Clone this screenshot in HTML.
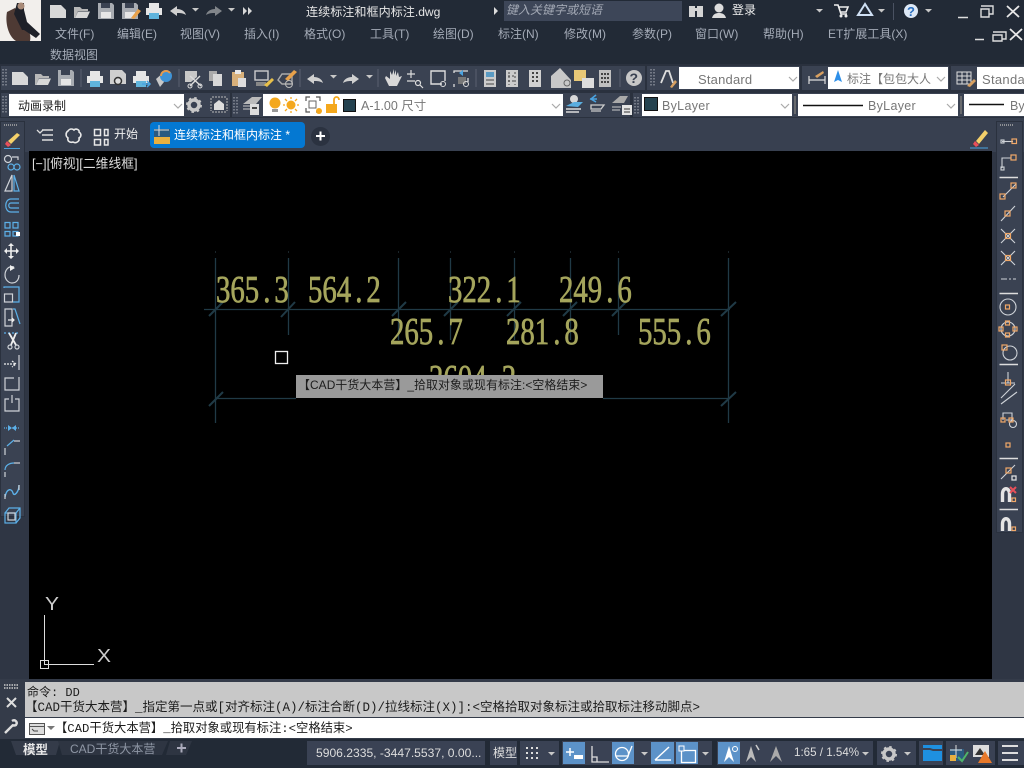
<!DOCTYPE html>
<html><head><meta charset="utf-8"><style>
html,body{margin:0;padding:0;background:#222a36;overflow:hidden}
#r{position:relative;width:1024px;height:768px;overflow:hidden;font-family:"Liberation Sans","Noto Sans CJK SC",sans-serif}
.b{position:absolute}
.t{position:absolute;white-space:nowrap;line-height:1}
.m{font-size:12px;color:#a4abb7}
.c{position:absolute;background:#fff}
.k{font-size:13px;color:#777}
.cm{font-family:"Liberation Mono","Noto Sans CJK SC",monospace;font-size:12.5px;color:#1c1c1c}
svg{position:absolute;left:0;top:0}
</style></head><body><div id="r">
<div class="b" style="left:0;top:0;width:1024px;height:64px;background:#222a36"></div>
<div class="b" style="left:504px;top:1px;width:178px;height:20px;background:#3d4658"></div>
<div class="b" style="left:0;top:64px;width:1024px;height:55px;background:#2a313e"></div>
<div class="b" style="left:1px;top:66px;width:644px;height:24px;background:#3a4252"></div>
<div class="b" style="left:647px;top:66px;width:377px;height:24px;background:#3a4252"></div>
<div class="b" style="left:1px;top:93px;width:229px;height:24px;background:#3a4252"></div>
<div class="b" style="left:232px;top:93px;width:398px;height:24px;background:#3a4252"></div>
<div class="b" style="left:633px;top:93px;width:391px;height:24px;background:#3a4252"></div>
<div class="b" style="left:0;top:118px;width:1024px;height:34px;background:#384050"></div>
<div class="b" style="left:0;top:121px;width:25px;height:396px;background:#3a4252;border:1px solid #2a313e;box-sizing:border-box"></div>
<div class="b" style="left:0;top:152px;width:29px;height:530px;background:#2f3644"></div>
<div class="b" style="left:992px;top:152px;width:32px;height:530px;background:#2f3644"></div>
<div class="b" style="left:996px;top:121px;width:27px;height:412px;background:#3a4252;border:1px solid #2a313e;box-sizing:border-box"></div>
<div class="b" style="left:0;top:121px;width:25px;height:396px;background:#3a4252;border:1px solid #2a313e;box-sizing:border-box"></div>
<div class="b" style="left:29px;top:151px;width:963px;height:528px;background:#000"></div>
<div class="b" style="left:0;top:679px;width:1024px;height:60px;background:#343b49"></div>
<div class="b" style="left:25px;top:682px;width:999px;height:35px;background:#c8c8c8"></div>
<div class="c" style="left:25px;top:718px;width:999px;height:20px"></div>
<div class="b" style="left:0;top:739px;width:1024px;height:29px;background:#222a36"></div>
<div class="c" style="left:9px;top:94px;width:175px;height:22px"></div>
<div class="c" style="left:263px;top:94px;width:300px;height:22px"></div>
<div class="c" style="left:642px;top:94px;width:150px;height:22px"></div>
<div class="c" style="left:798px;top:94px;width:160px;height:22px"></div>
<div class="c" style="left:964px;top:94px;width:60px;height:22px"></div>
<div class="c" style="left:679px;top:67px;width:120px;height:22px"></div>
<div class="c" style="left:828px;top:67px;width:120px;height:22px"></div>
<div class="c" style="left:977px;top:67px;width:47px;height:22px"></div>
<div class="b" style="left:150px;top:122px;width:155px;height:26px;background:#0478d2;border-radius:4px"></div>
<div class="b" style="left:311px;top:127px;width:19px;height:19px;background:#2b3240;border-radius:50%"></div>
<div class="b" style="left:307px;top:741px;width:178px;height:24px;background:#3a4254"></div>
<div class="b" style="left:490px;top:741px;width:27px;height:24px;background:#3a4254"></div>
<div class="b" style="left:520px;top:741px;width:39px;height:24px;background:#3a4254"></div>
<div class="b" style="left:562px;top:741px;width:150px;height:24px;background:#3a4254"></div>
<div class="b" style="left:717px;top:741px;width:156px;height:24px;background:#3a4254"></div>
<div class="b" style="left:877px;top:741px;width:39px;height:24px;background:#3a4254"></div>
<div class="b" style="left:919px;top:741px;width:24px;height:24px;background:#3a4254"></div>
<div class="b" style="left:946px;top:741px;width:49px;height:24px;background:#3a4254"></div>
<div class="b" style="left:998px;top:741px;width:26px;height:24px;background:#3a4254"></div>
<div class="b" style="left:563px;top:742px;width:22px;height:22px;background:#5c92c8"></div>
<div class="b" style="left:612px;top:742px;width:22px;height:22px;background:#5c92c8"></div>
<div class="b" style="left:651px;top:742px;width:23px;height:22px;background:#5c92c8"></div>
<div class="b" style="left:676px;top:742px;width:22px;height:22px;background:#5c92c8"></div>
<div class="b" style="left:718px;top:742px;width:22px;height:22px;background:#5c92c8"></div>

<svg width="1024" height="768" viewBox="0 0 1024 768" fill="none">
<defs>
<g id="new"><path d="M0 0H11L16 5V13H0Z" fill="#d8d8d8"/></g>
<g id="open"><path d="M0 2H6L8 4H14V6H4L1 13H0Z" fill="#b8b8b8"/><path d="M4 6.500H16L13 13H1Z" fill="#d8d8d8"/></g>
<g id="save"><path d="M0 0H14L16 2V16H0Z" fill="#a8acb2"/><rect x="3" y="0" width="9" height="5" fill="#3a4252"/><rect x="3" y="9" width="10" height="6" fill="#e6e6e6"/></g>
<g id="print"><rect x="3" y="0" width="10" height="5" fill="#e6e6e6"/><rect x="0" y="5" width="16" height="7" fill="#e6e6e6"/><rect x="3" y="10" width="10" height="6" fill="#60b4dc"/></g>
<g id="undo"><path d="M0 6L7 1V4C11 4 15 6 16 10C13 8 10 8 7 8V11Z" fill="#d0d0d0"/></g>
<g id="redo"><path d="M16 6L9 1V4C5 4 1 6 0 10C3 8 6 8 9 8V11Z" fill="#d0d0d0"/></g>
<g id="dd"><path d="M0 0H7L3.500 3.500Z" fill="#c8c8c8"/></g>
<g id="chev"><path d="M0 0L4 4L8 0" stroke="#aaa" stroke-width="1.200"/></g>
<g id="grip"><path d="M0 0V18M3 0V18" stroke="#9aa0aa" stroke-width="1.200" stroke-dasharray="1.500 1.500"/></g>
<g id="gear"><circle cx="8" cy="8" r="5" stroke="#c8c8c8" stroke-width="3.500"/><circle cx="8" cy="8" r="7" stroke="#c8c8c8" stroke-width="2" stroke-dasharray="2.500 3"/></g>
</defs>
<!-- avatar -->
<rect x="0" y="0" width="41" height="41" fill="#f2efec"/>
<path d="M7 12C5 22 8 36 16 41H30C32 34 26 24 23 20L15 8Z" fill="#4e3a34"/>
<path d="M17 3H24V10L27 22L40 34L36 38L24 30L22 30L14 14Z" fill="#1e2028"/>
<circle cx="21" cy="6" r="3.500" fill="#a88a78"/>
<!-- quick access -->
<use href="#new" x="50" y="5"/><use href="#open" x="74" y="5"/><use href="#save" x="98" y="3"/><use href="#save" x="122" y="3"/>
<path d="M131 18L138 9L141 11L134 19Z" fill="#e8a14a"/>
<use href="#print" x="146" y="3"/><use href="#undo" x="170" y="5"/><use href="#dd" x="192" y="8"/>
<g opacity=".55"><use href="#redo" x="206" y="5"/></g><use href="#dd" x="228" y="8"/>
<path d="M243 7L247 11L243 15ZM248 7L252 11L248 15Z" fill="#d8d8d8"/>
<path d="M494 7L498 11L494 15Z" fill="#ddd"/>
<!-- right title -->
<path d="M689 6H695V17H689ZM697 6H703V17H697Z" fill="#d4d4d4"/><rect x="694" y="8" width="4" height="3" fill="#d4d4d4"/>
<circle cx="719" cy="8" r="4.500" fill="#ddd"/><path d="M712 18C713 14 716 13 719 13C722 13 725 14 726 18Z" fill="#ddd"/>
<use href="#dd" x="816" y="9"/>
<path d="M834 5H838L841 14H847M839 7H848L846 12H841" stroke="#eee" stroke-width="1.600"/><circle cx="841" cy="16" r="1.500" fill="#eee"/><circle cx="846" cy="16" r="1.500" fill="#eee"/>
<path d="M865 4L858 15H872Z" stroke="#cfe0f4" stroke-width="2"/><use href="#dd" x="878" y="9"/>
<path d="M893.500 3V20" stroke="#4a5262"/>
<circle cx="911" cy="11" r="7" fill="#dde8f6"/>
<use href="#dd" x="925" y="9"/>
<path d="M958 17.500H968M981 6H993V14H989M981 9H989V17H981Z" stroke="#ddd" stroke-width="1.400"/>
<path d="M1007 6L1019 17M1019 6L1007 17" stroke="#e8e8e8" stroke-width="1.800"/>
<path d="M975 39.500H984M993 32H1006V39H1002M993 35H1002V41H993Z" stroke="#ddd" stroke-width="1.400"/>
<path d="M1010 29L1022 40M1022 29L1010 40" stroke="#e8e8e8" stroke-width="1.800"/>
<!-- toolbar row 1 -->
<use href="#grip" x="3" y="69"/>
<use href="#new" x="12" y="72"/><use href="#open" x="35" y="72"/><use href="#save" x="58" y="70"/>
<path d="M81 69V87" stroke="#596070"/>
<use href="#print" x="87" y="71"/>
<path d="M110 70H122L126 74V84H110Z" fill="#cfcfcf"/><circle cx="118" cy="81" r="3.500" stroke="#333" stroke-width="1.500" fill="#ddd"/>
<use href="#print" x="133" y="71"/><path d="M142 84H150M147 81L150 84L147 87" stroke="#4aa3e0" stroke-width="1.500"/>
<path d="M156 79L164 72V82L160 87Z" fill="#c8c8c8"/><circle cx="166" cy="76" r="6" fill="#3f93d6"/><path d="M161 76A5 5 0 0 1 170 73" stroke="#e89a4a" stroke-width="2"/>
<path d="M179 69V87" stroke="#596070"/>
<path d="M185 71H197V77L191 82H185Z" fill="#c8c8c8"/><path d="M190 76L201 86M200 76L190 86" stroke="#ddd" stroke-width="1.400"/><circle cx="190" cy="86" r="2" stroke="#ddd"/><circle cx="200" cy="86" r="2" stroke="#ddd"/>
<path d="M209 71H217V81H209Z" fill="#aaa"/><path d="M213 74H222V86H213Z" fill="#d8d8d8"/>
<path d="M232 72H244V78H238V86H232Z" fill="#d8b07a"/><rect x="235" y="70" width="6" height="4" fill="#e8e8e8"/><rect x="238" y="78" width="8" height="9" fill="#ddd"/>
<rect x="255" y="71" width="13" height="9" stroke="#ccc" stroke-width="1.400"/><path d="M256 82H266V86H256Z" fill="#888"/><path d="M264 85L272 78L274 80L267 87Z" fill="#e8c04a"/>
<path d="M278 80L282 74H292V84H282Z" stroke="#aaa" stroke-width="1.400"/><path d="M285 79L294 70L297 72L288 81Z" fill="#e8a14a"/><circle cx="289" cy="84" r="3.500" stroke="#bbb"/>
<path d="M300 69V87" stroke="#596070"/>
<use href="#undo" x="307" y="73"/><use href="#dd" x="330" y="75"/><use href="#redo" x="343" y="73"/><use href="#dd" x="366" y="75"/>
<path d="M378 69V87" stroke="#596070"/>
<path d="M385 78L389 86H397L402 76L399 77L398 72L396 76V70L394 75V69L392 75L390 71V79L386 76Z" fill="#d8d8d8"/>
<path d="M407 74H415M411 70V78M407 81H415" stroke="#ddd" stroke-width="1.200"/><circle cx="418" cy="83" r="2.500" stroke="#ddd" stroke-width="1.200"/><path d="M420 85L423 88" stroke="#ddd" stroke-width="1.200"/>
<path d="M442 84H431V71H445V81" stroke="#ddd" stroke-width="1.400"/><circle cx="443" cy="84" r="2.500" stroke="#ddd"/>
<path d="M454 73V71H468M454 87V84M468 78V82" stroke="#ddd" stroke-width="1.300"/><path d="M459 73L463 70V76Z" fill="#4aa3e0"/><rect x="458" y="77" width="8" height="7" fill="#777"/><circle cx="466" cy="84" r="2.500" stroke="#ddd"/>
<path d="M476 69V87" stroke="#596070"/>
<rect x="484" y="70" width="12" height="17" fill="#ccc"/><rect x="486" y="72" width="8" height="5" fill="#5a9bc4"/><path d="M486 80H494M486 84H494" stroke="#444"/>
<rect x="506" y="70" width="12" height="17" fill="#ccc"/><path d="M509 72V85M515 72V85M508 76H516M508 81H516" stroke="#444" stroke-dasharray="2 2"/>
<path d="M529 70H541V87H529Z" fill="#d0d0d0"/><path d="M532 73H538M532 77H538M532 81H538" stroke="#444" stroke-width="2" stroke-dasharray="2 2"/>
<path d="M551 76L560 68L571 80V88H551Z" fill="#c8c8c8"/><circle cx="567" cy="83" r="3" stroke="#666"/>
<rect x="574" y="70" width="12" height="11" fill="#e8c877"/><rect x="582" y="78" width="12" height="10" fill="#ddd"/>
<rect x="599" y="70" width="12" height="17" fill="#c0c0c0"/><path d="M601 74H609M601 78H609M601 82H609" stroke="#444" stroke-width="2" stroke-dasharray="2 1"/>
<path d="M620 69V87" stroke="#596070"/>
<circle cx="634" cy="78" r="8" fill="#c8c8c8"/>
<use href="#grip" x="651" y="69"/>
<path d="M661 83L666 71H669L673 83" stroke="#ddd" stroke-width="1.800"/><path d="M670 87L675 80L677 82L672 88Z" fill="#d8a060"/>
<path d="M801 66V90" stroke="#2a313e" stroke-width="2"/>
<path d="M809 76V84M825 76V84M809 80H825" stroke="#ddd" stroke-width="1.200"/><path d="M815 76L823 71L824 73L817 78Z" fill="#d8a060"/>
<path d="M834 82L838 70L842 82L838 80Z" fill="#2e8fe8"/>
<path d="M950 66V90" stroke="#2a313e" stroke-width="2"/>
<path d="M957 72H971V84H957ZM957 76H971M957 80H971M962 72V84M967 72V84" stroke="#ddd"/><path d="M967 86L974 79L976 81L970 87Z" fill="#d8a060"/>
<use href="#chev" x="789" y="77"/><use href="#chev" x="937" y="77"/>
<!-- toolbar row 2 -->
<use href="#grip" x="3" y="96"/>
<use href="#chev" x="174" y="104"/>
<use href="#gear" x="186" y="97"/>
<path d="M212 97H226M212 112H226M211 98V111M227 98V111" stroke="#bbb" stroke-dasharray="2 1"/><path d="M214 104L219 100L224 104V110H214Z" fill="#ddd"/>
<use href="#grip" x="234" y="97"/>
<path d="M243 104L252 97H262L256 104Z" fill="#bbb"/><path d="M243 109H252M243 106H254" stroke="#ccc"/><rect x="250" y="104" width="9" height="11" fill="#ddd"/><rect x="252" y="107" width="5" height="2" fill="#444"/>
<circle cx="275" cy="103" r="5.500" fill="#f4a81d"/><rect x="272" y="109" width="6" height="3" fill="#999"/>
<circle cx="291" cy="105" r="4.500" fill="#f4a81d"/><path d="M291 97V99M291 111V113M283 105H285M297 105H299M285 99L287 101M297 99L295 101M285 111L287 109M297 111L295 109" stroke="#f4a81d" stroke-width="1.300"/>
<path d="M306 101V97H310M316 97H320V101M306 108V112H310M316 112H319" stroke="#555" stroke-width="1.200"/><rect x="309" y="101" width="7" height="7" stroke="#666"/><circle cx="319" cy="111" r="3" fill="#f4a81d"/>
<rect x="326" y="104" width="11" height="9" fill="#f4a81d"/><path d="M334 104V100C334 96 339 96 339 100" stroke="#f4a81d" stroke-width="1.800"/>
<rect x="343.500" y="99.500" width="12" height="12" fill="#24424f" stroke="#111"/>
<use href="#chev" x="552" y="104"/>
<circle cx="574" cy="99" r="4" fill="#d8d8d8"/><path d="M566 106L574 102H583L578 107Z" fill="#5aaee0"/><path d="M566 109H581M566 112H579" stroke="#ddd" stroke-width="1.400"/>
<path d="M590 99H597M596 95L591 99L596 102" stroke="#4aa3e0" stroke-width="1.600"/><path d="M591 105H604L601 109H591ZM591 111H601" stroke="#ccc" stroke-width="1.300"/>
<path d="M612 103L620 96H628L624 103Z" fill="#aaa"/><path d="M612 107H621M612 110H620" stroke="#ccc"/><rect x="622" y="105" width="10" height="10" fill="#e4e4e4"/><path d="M624 109H630M624 112H630" stroke="#333"/>
<use href="#grip" x="635" y="97"/>
<rect x="644.500" y="97.500" width="13" height="13" fill="#24424f" stroke="#111"/>
<use href="#chev" x="781" y="104"/>
<path d="M795 96V114" stroke="#777" stroke-width="1.500"/>
<path d="M803 105.500H863" stroke="#111" stroke-width="1.500"/><use href="#chev" x="947" y="104"/>
<path d="M961 96V114" stroke="#777" stroke-width="1.500"/>
<path d="M969 104.500H1004" stroke="#111" stroke-width="1.500"/>
<!-- tab row -->
<path d="M37 130L40 133L43 130" stroke="#ddd" stroke-width="1.300"/><path d="M42 130H53M42 135H53M42 140H53" stroke="#ddd" stroke-width="1.400"/>
<path d="M68 131C70 128 73 129 74 130C76 128 80 130 79 132C82 134 81 137 79 138C80 141 76 144 73 142C70 143 67 141 68 138C65 136 66 132 68 131Z" stroke="#e8e8e8" stroke-width="1.600"/>
<path d="M94.500 129.500H100.500V135.500H94.500ZM104.500 129.500H108V135.500H104.500ZM94.500 139.500H100.500V145H94.500ZM104.500 139.500H108V145H104.500Z" stroke="#e8e8e8" stroke-width="1.500"/>
<rect x="154" y="129" width="16" height="14" fill="#2a5a80"/><path d="M159 125V136M154 130H169" stroke="#ddd"/><rect x="154" y="137" width="16" height="7" fill="#e8b040"/>
<path d="M316 136H325M320.500 131.500V140.500" stroke="#fff" stroke-width="2"/>
<!-- erasers -->
<path d="M8 141L17 133L20 135L11 144Z" fill="#f4d06a"/><path d="M7 141L11 145L8 147L5 144Z" fill="#e8505a"/><path d="M4 148.500H20" stroke="#4aa3e0"/>
<path d="M976 141L985 130L988 133L979 144Z" fill="#f4d06a"/><path d="M975 141L979 145L976 147L973 144Z" fill="#e8505a"/><path d="M970 148H988" stroke="#4aa3e0"/>
<path d="M4 125H17M1000 125H1013" stroke="#aaa" stroke-dasharray="1 1" stroke-width="1.500"/>
<!-- left toolbar -->
<g stroke="#cfd3d8" stroke-width="1.200">
<circle cx="8" cy="159" r="3.500"/><path d="M12 157H18V160"/><circle cx="11" cy="167" r="3" stroke="#5cb0e8"/><circle cx="17" cy="167" r="3" stroke="#5cb0e8"/>
<path d="M5 191L12 175V191Z"/><path d="M14 175L19 191H14Z" stroke="#5cb0e8"/>
<path d="M19 199H11C4 199 4 212 11 212H19M19 203H11C8 203 8 208 11 208H19" stroke="#5cb0e8"/>
<path d="M5 222.500H10V228H5ZM13 222.500H18V228H13ZM5 231.500H10V236H5ZM13 231.500H18V236H13Z" stroke="#5cb0e8"/>
<path d="M11 245V257M6 251H17" stroke="#eee" stroke-width="1.600"/><path d="M11 243L8 246H14ZM11 259L8 256H14ZM4 251L7 248V254ZM19 251L16 248V254Z" fill="#eee" stroke="none"/>
<path d="M14 267C8 265 5 271 5 275C5 280 9 283 12 283C16 283 19 280 19 275"/><path d="M10 265L15 268L10 271Z" fill="#eee" stroke="none"/>
<rect x="4.500" y="294" width="8" height="8" /><path d="M4 288V287H19V302H13" stroke="#5cb0e8"/>
<path d="M5 309H12V326H5Z"/><path d="M13 309H15L20 324" stroke="#5cb0e8"/><path d="M8 320H14M12 318L14 320L12 322" stroke="#eee"/>
<path d="M4 333H20" stroke="#5cb0e8" stroke-dasharray="2 2"/><path d="M9 333L16 345M16 333L11 345" stroke="#eee" stroke-width="1.800"/><circle cx="10" cy="347" r="2"/><circle cx="17" cy="347" r="2"/>
<path d="M19 355V370" /><path d="M4 364H16M12 361L16 364L12 367" stroke="#eee" stroke-dasharray="2 1"/>
<path d="M14 378H5V390H19V377" />
<path d="M9 399H5V411H19V399H15M12 395V403" />
<path d="M4 428H20" stroke="#5cb0e8" stroke-dasharray="1 1"/><path d="M8 425L12 428L8 431ZM16 425L12 428L16 431Z" fill="#5cb0e8" stroke="none"/>
<path d="M5 455V448" /><path d="M14 441H20" /><path d="M7 446L14 440" stroke="#5cb0e8"/>
<path d="M5 477V472" /><path d="M14 463H20" /><path d="M5 470C5 465 10 463 14 463" stroke="#5cb0e8"/>
<path d="M5 497C7 487 12 489 13 493C14 497 19 492 19 485" stroke="#5cb0e8" stroke-width="1.400"/><path d="M5 499V494M19 490V485" />
<rect x="5" y="513" width="11" height="10" stroke="#5cb0e8"/><path d="M5 513L9 508H20V518L16 523M16 513L20 508" stroke="#5cb0e8"/><rect x="8" y="513" width="7" height="7" />
</g>
<rect x="16" y="232" width="4" height="4" fill="#fff"/>
<!-- right toolbar -->
<g stroke="#cfd3d8" stroke-width="1.100">
<path d="M1002 141.500H1013"/><rect x="1001" y="140" width="3" height="3"/>
<path d="M1002 168V158H1011"/><rect x="1001" y="167" width="3" height="3"/>
<path d="M999.500 177.500H1018" stroke="#ddd" stroke-width="1.600"/>
<path d="M1003 197L1016 184"/>
<path d="M1001 221L1015 206"/>
<path d="M1001 229L1015 243M1015 229L1001 243"/>
<path d="M1001 251L1015 265M1015 251L1001 265"/>
<path d="M1001 279H1007M1009 279H1011M1013 279H1016"/>
<path d="M999.500 293.500H1018" stroke="#ddd" stroke-width="1.600"/>
<circle cx="1008" cy="307" r="8"/>
<circle cx="1008" cy="329" r="7"/>
<circle cx="1010" cy="353" r="7"/>
<path d="M999.500 364.500H1018" stroke="#ddd" stroke-width="1.600"/>
<path d="M1001 383H1015M1008 372V383"/>
<path d="M1001 398L1015 384M1001 404L1017 392"/>
<path d="M1003 420V413H1012V420M1006 420H1012"/><circle cx="1013" cy="424" r="3.500"/>
<path d="M999.500 458.500H1018" stroke="#ddd" stroke-width="1.600"/>
<path d="M1001 479L1015 465"/>
<path d="M999.500 509.500H1018" stroke="#ddd" stroke-width="1.600"/>
</g>
<g stroke="#f0a868" stroke-width="1.200">
<rect x="1012" y="139" width="4.500" height="4.500"/>
<rect x="1011" y="155" width="5" height="5"/>
<rect x="1011" y="183" width="5" height="5"/><rect x="1000" y="194" width="5" height="5"/>
<rect x="1005" y="211" width="5" height="5"/>
<rect x="1005.500" y="233.500" width="5" height="5"/>
<rect x="1005.500" y="255.500" width="5" height="5"/>
<rect x="1005.500" y="305" width="4" height="4"/>
<rect x="1005.500" y="321" width="4" height="4"/><rect x="1005.500" y="333" width="4" height="4"/><rect x="999" y="327" width="4" height="4"/><rect x="1013" y="327" width="4" height="4"/>
<rect x="1002" y="345" width="5" height="5"/>
<rect x="1005.500" y="380" width="5" height="5"/>
<rect x="1001" y="418" width="4" height="4"/><rect x="1009" y="418" width="4" height="4"/>
<rect x="1006" y="443" width="4" height="4"/>
<rect x="1006" y="468" width="5" height="5"/>
<rect x="1012" y="498" width="3.500" height="3.500"/><rect x="1012" y="527" width="3.500" height="3.500"/>
</g>
<rect x="1012" y="476" width="4" height="4" stroke="#ddd" stroke-width="1.300"/>
<path d="M1002.500 502V494C1002.500 487 1009.500 487 1009.500 494V502" stroke="#e4e4e4" stroke-width="3.400"/><path d="M1010 487L1016 493M1016 487L1010 493" stroke="#e8505a" stroke-width="2"/>
<path d="M1002.500 531V524C1002.500 517 1009.500 517 1009.500 524V531" stroke="#e4e4e4" stroke-width="3.400"/>
<!-- dimensions -->
<g stroke="#203a46" stroke-width="1.300">
<path d="M215.500 258V423M728.500 258V423M288.500 258V335M398.500 258V340M450.500 258V340M514.500 258V340M570.500 258V340M618.500 258V335"/>
<path d="M204 309.500H730M215 398.500H296M603 398.500H728"/>
<path d="M209 316L223 302M281 317L295 302M392 316L406 302M444 316L458 302M507 316L521 302M563 316L577 302M612 316L626 302M721 316L736 302M209 406L223 392M721 406L736 392" stroke-width="2"/>
<path d="M215 252h1M288 252h1M398 252h1M450 252h1M514 252h1M570 252h1M618 252h1M728 252h1" stroke="#2a3a42"/>
</g>
<g fill="#a5a55c" stroke="#a5a55c" stroke-width=".7" font-size="36" style="font-family:'Liberation Serif',serif">
<text transform="translate(216 302) scale(.8 1.070)" x="0 18 36 59 73">365.3</text>
<text transform="translate(308 302) scale(.8 1.070)" x="0 18 36 59 73">564.2</text>
<text transform="translate(448 302) scale(.8 1.070)" x="0 18 36 59 73">322.1</text>
<text transform="translate(559 302) scale(.8 1.070)" x="0 18 36 59 73">249.6</text>
<text transform="translate(390 344) scale(.8 1.070)" x="0 18 36 59 73">265.7</text>
<text transform="translate(506 344) scale(.8 1.070)" x="0 18 36 59 73">281.8</text>
<text transform="translate(638 344) scale(.8 1.070)" x="0 18 36 59 73">555.6</text>
<text transform="translate(429 391) scale(.8 1.070)" x="0 18 36 54 77 91">2604.2</text>
</g>
<rect x="275.500" y="351.500" width="12" height="12" stroke="#eee" stroke-width="1.300"/>
<!-- UCS -->
<path d="M44.500 615V664.500H94" stroke="#ddd"/><rect x="40.500" y="660.500" width="8" height="8" stroke="#ddd"/>
<!-- command -->
<path d="M4 685H19M4 688H19" stroke="#ccc" stroke-dasharray="1.500 1" stroke-width="1.500"/>
<path d="M7 698L16 707M16 698L7 707" stroke="#ddd" stroke-width="2"/>
<path d="M5 733L13 725M12 721C15 719 18 722 16 725C14 726 12 725 12 725" stroke="#ddd" stroke-width="2.400"/>
<rect x="29.500" y="723.500" width="15" height="11" fill="#ddd" stroke="#555"/><path d="M29 726.500H45" stroke="#555"/><path d="M32 729L34 731H38" stroke="#444"/>
<path d="M47 726H55L51 730Z" fill="#777"/>
<!-- status left -->
<path d="M11 741L16 755H56L60 741" fill="#343b49"/>
<path d="M58 741L62 755H162L168 741Z" fill="#2e3542"/>
<path d="M170 741L166 755H186L192 741Z" fill="#2e3542"/>
<path d="M177 748H186M181.500 743.500V752.500" stroke="#aab" stroke-width="2"/>
<!-- status right -->
<g fill="#ddd"><rect x="526" y="747" width="2" height="2"/><rect x="531" y="747" width="2" height="2"/><rect x="536" y="747" width="2" height="2"/><rect x="526" y="752" width="2" height="2"/><rect x="531" y="752" width="2" height="2"/><rect x="536" y="752" width="2" height="2"/><rect x="526" y="757" width="2" height="2"/><rect x="531" y="757" width="2" height="2"/><rect x="536" y="757" width="2" height="2"/></g>
<use href="#dd" x="548" y="752"/>
<path d="M566 752H574M570 748V756" stroke="#fff" stroke-width="1.500"/><rect x="574" y="755" width="9" height="4" fill="#fff"/>
<path d="M592 746V762H609M592 757H597V762" stroke="#ddd" stroke-width="1.300"/>
<circle cx="622" cy="754" r="6.500" stroke="#fff" stroke-width="1.300"/><path d="M616 756H628L632 746" stroke="#fff" stroke-width="1.300"/>
<use href="#dd" x="641" y="752"/>
<path d="M655 760H671M655 760L669 747" stroke="#fff" stroke-width="1.500"/>
<rect x="681.500" y="750.500" width="14" height="12" stroke="#fff" stroke-width="1.300"/><rect x="679" y="746" width="5" height="5" fill="#5c92c8" stroke="#fff"/>
<use href="#dd" x="702" y="752"/>
<path d="M724 762L729 746L734 762L729 757Z" fill="#fff"/><circle cx="735" cy="749" r="2.500" stroke="#fff"/>
<path d="M746 762L751 746L756 762L751 757Z" fill="#bbb"/><path d="M756 745L759 750" stroke="#ccc" stroke-width="1.500"/>
<path d="M770 762L776 746L782 762L776 756Z" fill="#aaa"/>
<use href="#dd" x="862" y="752"/>
<use href="#gear" x="881" y="746"/>
<use href="#dd" x="904" y="752"/>
<path d="M923 745H942V749H933L930 748H923Z" fill="#1e90e0"/><path d="M923 750H930L933 751H942V761H923Z" fill="#1e90e0"/>
<path d="M950 749H964V761H950Z" fill="#2a5a80"/><path d="M956 745V758M950 750H962" stroke="#ddd"/><rect x="950" y="755" width="6" height="6" fill="#e8b040"/><path d="M958 757L962 761L968 752" stroke="#4eb36a" stroke-width="2"/>
<path d="M973 745H989V757H973Z" fill="#ddd"/><path d="M975 755L980 748L985 755Z" fill="#333"/><path d="M985 751L978 763H992Z" fill="#e8792a"/>
<path d="M1002 746H1018M1002 753H1018M1002 760H1018" stroke="#ddd" stroke-width="2"/>
</svg>

<svg width="1024" height="768" viewBox="0 0 1024 768" style="pointer-events:none">
<text x="45" y="610" font-size="18" fill="#ccc" textLength="14" lengthAdjust="spacingAndGlyphs" style="font-family:'Liberation Sans',sans-serif">Y</text>
<text x="97" y="662" font-size="18" fill="#ccc" textLength="14" lengthAdjust="spacingAndGlyphs" style="font-family:'Liberation Sans',sans-serif">X</text>
<text x="907" y="16" font-size="13" font-weight="700" fill="#2a6fc0" style="font-family:'Liberation Sans',sans-serif">?</text>
<text x="629.500" y="83" font-size="14" font-weight="700" fill="#3a4252" style="font-family:'Liberation Sans',sans-serif">?</text>
</svg>

<div class="t" style="left:306px;top:6px;font-size:12.1px;color:#e6e6e6">连续标注和框内标注.dwg</div>
<div class="t" style="left:506px;top:4px;font-size:12px;color:#a2a8b4;font-style:italic">键入关键字或短语</div>
<div class="t" style="left:732px;top:4px;font-size:12px;color:#eee">登录</div>
<div class="t m" style="left:55px;top:28px">文件(F)</div>
<div class="t m" style="left:117px;top:28px">编辑(E)</div>
<div class="t m" style="left:180px;top:28px">视图(V)</div>
<div class="t m" style="left:244px;top:28px">插入(I)</div>
<div class="t m" style="left:304px;top:28px">格式(O)</div>
<div class="t m" style="left:370px;top:28px">工具(T)</div>
<div class="t m" style="left:433px;top:28px">绘图(D)</div>
<div class="t m" style="left:498px;top:28px">标注(N)</div>
<div class="t m" style="left:564px;top:28px">修改(M)</div>
<div class="t m" style="left:632px;top:28px">参数(P)</div>
<div class="t m" style="left:695px;top:28px">窗口(W)</div>
<div class="t m" style="left:763px;top:28px">帮助(H)</div>
<div class="t m" style="left:828px;top:28px">ET扩展工具(X)</div>
<div class="t m" style="left:50px;top:49px">数据视图</div>
<div class="t k" style="left:698px;top:73px;letter-spacing:.2px">Standard</div>
<div class="t k" style="left:847px;top:73px;font-size:12px">标注【包包大人</div>
<div class="t k" style="left:982px;top:73px;letter-spacing:.3px">Standard</div>
<div class="t" style="left:18px;top:100px;font-size:12px;color:#222">动画录制</div>
<div class="t k" style="left:361px;top:100px;font-size:12.5px">A-1.00 尺寸</div>
<div class="t k" style="left:662px;top:100px;font-size:12.5px;letter-spacing:.3px">ByLayer</div>
<div class="t k" style="left:868px;top:100px;font-size:12.5px;letter-spacing:.3px">ByLayer</div>
<div class="t k" style="left:1010px;top:100px;font-size:12.5px">ByLayer</div>
<div class="t" style="left:114px;top:128px;font-size:12px;color:#eee">开始</div>
<div class="t" style="left:174px;top:129px;font-size:12px;color:#fff">连续标注和框内标注 *</div>
<div class="t" style="left:32px;top:158px;font-size:12.8px;color:#ddd">[&#8722;][俯视][二维线框]</div>
<div class="b" style="left:296px;top:375px;width:307px;height:23px;background:#9a9a9a"></div>
<div class="t" style="left:298px;top:380px;font-size:11.9px;color:#1c1c1c;letter-spacing:.1px">【CAD干货大本营】_拾取对象或现有标注:&lt;空格结束&gt;</div>
<div class="t cm" style="left:27px;top:687px;font-size:12px">命令: DD</div>
<div class="t cm" style="left:25px;top:702px">【CAD干货大本营】_指定第一点或[对齐标注(A)/标注合断(D)/拉线标注(X)]:&lt;空格拾取对象标注或拾取标注移动脚点&gt;</div>
<div class="t cm" style="left:55px;top:723px;font-size:12.3px">【CAD干货大本营】_拾取对象或现有标注:&lt;空格结束&gt;</div>
<div class="t" style="left:23px;top:744px;font-size:12.5px;font-weight:700;color:#e8e8e8">模型</div>
<div class="t" style="left:70px;top:743px;font-size:12px;color:#8f97a5">CAD干货大本营</div>
<div class="t" style="left:316px;top:747px;font-size:12.1px;color:#ddd">5906.2335, -3447.5537, 0.00...</div>
<div class="t" style="left:493px;top:747px;font-size:12px;color:#ddd">模型</div>
<div class="t" style="left:794px;top:747px;font-size:11.6px;color:#ddd">1:65 / 1.54%</div>
</div></body></html>
